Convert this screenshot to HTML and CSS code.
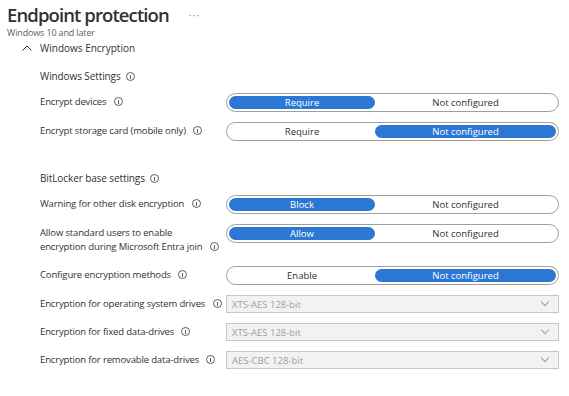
FILE: index.html
```html
<!DOCTYPE html>
<html lang="en">
<head>
    <meta charset="UTF-8">
    <title>Endpoint protection</title>
    <link rel="stylesheet" href="styles.css">
</head>
<body>
<div class="header">
    <h1>Endpoint protection</h1>
    <span class="more">&middot;&middot;&middot;</span>
</div>
<div class="subtitle">Windows 10 and later</div>

<div class="section">
    <svg class="chevron" width="10" height="6" viewBox="0 0 10 6">
        <path d="M0.5 5.5 L5 1 L9.5 5.5" fill="none" stroke="#323130" stroke-width="1"/>
    </svg>
    Windows Encryption
</div>

<div class="content">
    <div class="group first">Windows Settings <i class="info"></i></div>

    <div class="row">
        <div class="label">Encrypt devices <i class="info"></i></div>
        <div class="toggle">
            <span class="opt on">Require</span>
            <span class="opt">Not configured</span>
        </div>
    </div>
    <div class="row">
        <div class="label">Encrypt storage card (mobile only) <i class="info"></i></div>
        <div class="toggle">
            <span class="opt">Require</span>
            <span class="opt on">Not configured</span>
        </div>
    </div>

    <div class="group">BitLocker base settings <i class="info"></i></div>

    <div class="row">
        <div class="label">Warning for other disk encryption <i class="info"></i></div>
        <div class="toggle">
            <span class="opt on">Block</span>
            <span class="opt">Not configured</span>
        </div>
    </div>
    <div class="row tall">
        <div class="label">Allow standard users to enable<br>encryption during Microsoft Entra join <i class="info"></i></div>
        <div class="toggle">
            <span class="opt on">Allow</span>
            <span class="opt">Not configured</span>
        </div>
    </div>
    <div class="row">
        <div class="label">Configure encryption methods <i class="info"></i></div>
        <div class="toggle">
            <span class="opt">Enable</span>
            <span class="opt on">Not configured</span>
        </div>
    </div>

    <div class="row">
        <div class="label">Encryption for operating system drives <i class="info"></i></div>
        <div class="select">XTS-AES 128-bit <b class="caret"></b></div>
    </div>
    <div class="row">
        <div class="label">Encryption for fixed data-drives <i class="info"></i></div>
        <div class="select">XTS-AES 128-bit <b class="caret"></b></div>
    </div>
    <div class="row">
        <div class="label">Encryption for removable data-drives <i class="info"></i></div>
        <div class="select">AES-CBC 128-bit <b class="caret"></b></div>
    </div>
</div>
</body>
</html>
```

FILE: styles.css
```css
body {
    margin: 0;
    padding: 0 10px 0 7px;
    font-family: "Open Sans", "Noto Sans", sans-serif;
    color: #323130;
    background: #fff;
}

.header {
    display: flex;
    align-items: center;
    height: 25px;
    padding-top: 2px;
}

h1 {
    margin: 0;
    font-size: 18.5px;
    font-weight: 600;
    letter-spacing: -0.9px;
}

.more {
    margin-left: 20px;
    font-size: 11px;
    color: #8a8886;
    letter-spacing: 1px;
}

.subtitle {
    font-size: 9px;
    color: #605e5c;
    line-height: 11px;
    letter-spacing: -0.15px;
}

.section {
    display: flex;
    align-items: center;
    height: 20px;
    padding-left: 15px;
    font-size: 10px;
}

.chevron {
    margin-right: 8px;
}

.content {
    padding-left: 33px;
    font-size: 9.5px;
}

.group {
    display: flex;
    align-items: center;
    height: 14px;
    margin: 30px 0 10px;
    font-size: 10px;
    letter-spacing: -0.1px;
}

.group.first {
    margin-top: 11px;
}

.row {
    display: flex;
    align-items: flex-start;
    margin-bottom: 10px;
}

.row.tall {
    margin-bottom: 12px;
}

.label {
    width: 186px;
    flex: none;
    line-height: 14px;
    padding-top: 2px;
    white-space: nowrap;
    letter-spacing: -0.15px;
}

.info {
    display: inline-block;
    width: 7px;
    height: 7px;
    border: 1px solid #605e5c;
    border-radius: 50%;
    margin-left: 5px;
    vertical-align: -1px;
    position: relative;
}

.info::after {
    content: "";
    position: absolute;
    left: 3px;
    top: 2px;
    width: 1px;
    height: 4px;
    background: #605e5c;
}

.toggle {
    display: flex;
    width: 333px;
    height: 19px;
    box-sizing: border-box;
    border: 1px solid #a19f9d;
    border-radius: 10px;
    padding: 2px;
}

.opt {
    display: flex;
    align-items: center;
    justify-content: center;
    border-radius: 8px;
    color: #323130;
}

.opt:first-child {
    width: 146px;
}

.opt:last-child {
    flex: 1;
}

.opt.on {
    background: #2b77d4;
    color: #fff;
}

.select {
    display: flex;
    align-items: center;
    width: 333px;
    height: 18px;
    box-sizing: border-box;
    border: 1px solid #c8c6c4;
    background: #f3f2f1;
    color: #a19f9d;
    padding: 0 10px 0 5px;
}

.caret {
    margin-left: auto;
    width: 5px;
    height: 5px;
    border-right: 1px solid #a19f9d;
    border-bottom: 1px solid #a19f9d;
    transform: rotate(45deg);
    margin-top: -4px;
}
```
